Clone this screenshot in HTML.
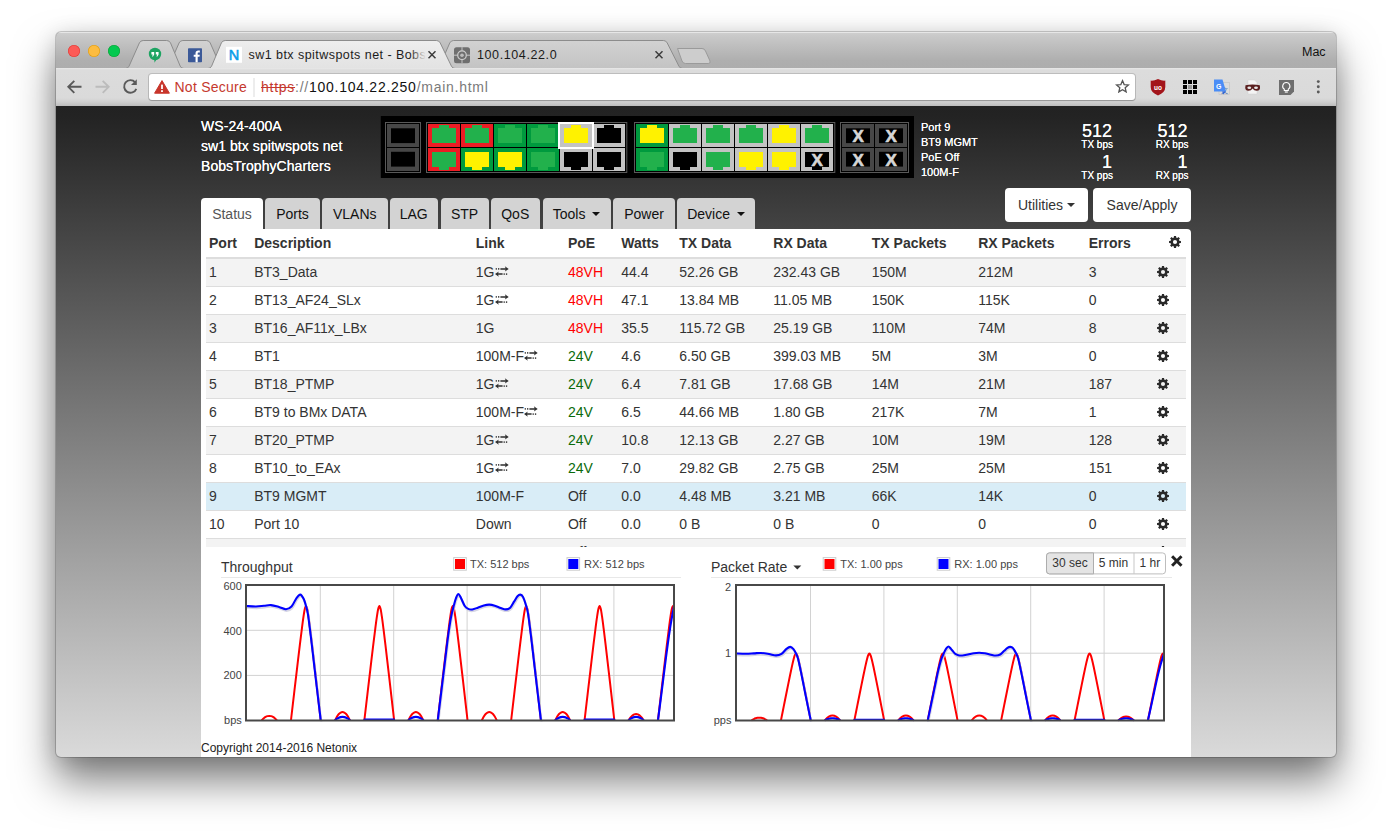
<!DOCTYPE html>
<html lang="en">
<head>
<meta charset="utf-8">
<title>sw1 btx spitwspots net - BobsTrophyCharters</title>
<style>
*{box-sizing:border-box;margin:0;padding:0}
html,body{width:1392px;height:837px;overflow:hidden;background:#fff}
body{font-family:"Liberation Sans",Arial,Helvetica,sans-serif;font-size:14px;color:#333;position:relative}
.abs{position:absolute}
#win{position:absolute;left:56px;top:32px;width:1280px;height:725px;border-radius:5px 5px 5px 5px;
  box-shadow:0 0 0 1px rgba(0,0,0,.18),0 24px 42px rgba(0,0,0,.5),0 3px 22px rgba(0,0,0,.14);overflow:hidden;background:#888}
#titlebar{position:absolute;left:0;top:0;width:1280px;height:36px;background:linear-gradient(#cecece 0,#c9c9c9 8%,#afafaf 78%,#adadad 100%);border-top:1px solid #e6e6e6}
.tl{position:absolute;top:12px;width:12px;height:12px;border-radius:50%}
#toolbar{position:absolute;left:0;top:36px;width:1280px;height:38px;background:linear-gradient(#e9e9e9 0,#dcdcdc 2px,#dadada 30px,#cfcfcf 34px,#bdbdbd 100%)}
#urlbox{position:absolute;left:93px;top:6px;width:986px;height:26px;background:#fff;border-radius:3px;box-shadow:0 0 0 1px rgba(0,0,0,.14),0 1px 1px rgba(0,0,0,.18)}
.ctext{font-family:"Liberation Sans",Arial,sans-serif;white-space:nowrap}
#page{position:absolute;left:0;top:74px;width:1280px;height:651px;background:linear-gradient(#222 0,#232323 1.5%,#dadada 100%);overflow:hidden}
.hdr{position:absolute;color:#fff;white-space:nowrap}
#panel{position:absolute;left:145px;top:123px;width:990px;height:540px;background:#fff;border-radius:0 4px 0 0}
.ntab{position:absolute;top:92px;height:31px;border-radius:4px 4px 0 0;background:#d3d3d3;color:#111;font-size:14px;line-height:20px;padding:6px 0 0 0;text-align:center;white-space:nowrap}
.ntab.act{background:#fff;color:#555}
.caret{display:inline-block;width:0;height:0;border-left:4px solid transparent;border-right:4px solid transparent;border-top:4px solid currentColor;vertical-align:middle;margin-left:3px;position:relative;top:-1px}
.btn{position:absolute;top:82px;height:34px;background:#fff;border-radius:4px;color:#333;font-size:14px;line-height:20px;padding-top:7px;text-align:center;white-space:nowrap}
table{border-collapse:collapse;table-layout:fixed;position:absolute;left:5px;top:0;width:980px}
th,td{text-align:left;padding:4px 0 4px 3px;font-size:14px;line-height:19px;white-space:nowrap;overflow:hidden;color:#333}
th{font-weight:bold;border-bottom:2px solid #ddd;padding:5px 0 4px 3px;line-height:19px}
td{border-top:1px solid #ddd}
tr.odd td{background:#f3f3f3}
tr.sel td{background:#d9edf7}
.red{color:#f00}.grn{color:#0a6a0a}
.gear{display:block}
.lg{position:absolute;font-size:11px;color:#333;white-space:nowrap}
.sw{position:absolute;width:13px;height:13px;border:1px solid #ccc;padding:1px;background:#fff}
.sw i{display:block;width:9px;height:9px}
.ylab{position:absolute;font-size:11px;color:#444;text-align:right;width:30px;line-height:12px}
</style>
</head>
<body>

<div id="win">
<div id="titlebar">
<div class="tl" style="left:12px;background:#fc5b57;box-shadow:inset 0 0 0 .6px #df3d38"></div>
<div class="tl" style="left:32px;background:#fdbc40;box-shadow:inset 0 0 0 .6px #de9c12"></div>
<div class="tl" style="left:52px;background:#04c950;box-shadow:inset 0 0 0 .6px #12a23a"></div>
<svg class="abs" style="left:0;top:-1px" width="1280" height="37" viewBox="0 0 1280 37">
<defs>
<linearGradient id="gi" x1="0" y1="0" x2="0" y2="1"><stop offset="0" stop-color="#d2d2d2"/><stop offset="1" stop-color="#c3c3c3"/></linearGradient>
<linearGradient id="ga" x1="0" y1="0" x2="0" y2="1"><stop offset="0" stop-color="#eeeeee"/><stop offset="1" stop-color="#e2e2e2"/></linearGradient>
</defs>
<!-- new tab button -->
<path d="M621.5 16.5 H646 Q648.5 16.5 649.5 19 L654 29 Q654.8 31.5 652.3 31.5 H629.5 Q627 31.5 626 29 Z" fill="#cdcdcd" stroke="#9a9a9a" stroke-width="1"/>
<!-- tab 4 -->
<path d="M380.0 36.5 Q382.5 36.5 383.6 34.1 L393.8 10.9 Q395.0 8.5 397.6 8.5 H607.4 Q610.0 8.5 611.2 10.9 L622.9 34.1 Q624.0 36.5 626.5 36.5 Z" fill="url(#gi)" stroke="#8c8c8c" stroke-width="1"/>
<!-- tab 2 -->
<path d="M109.3 36.5 Q111.8 36.5 112.9 34.1 L123.1 10.9 Q124.3 8.5 126.9 8.5 H150.4 Q153.0 8.5 154.2 10.9 L164.4 34.1 Q165.5 36.5 168.0 36.5 Z" fill="url(#gi)" stroke="#8c8c8c" stroke-width="1"/>
<!-- tab 1 -->
<path d="M69.5 36.5 Q72.0 36.5 73.1 34.1 L83.4 10.9 Q84.6 8.5 87.2 8.5 H110.7 Q113.3 8.5 114.5 10.9 L124.2 34.1 Q125.3 36.5 127.8 36.5 Z" fill="url(#gi)" stroke="#8c8c8c" stroke-width="1"/>
<!-- baseline -->
<rect x="0" y="36" width="1280" height="1" fill="#e9e9e9"/>
<!-- active tab -->
<path d="M152.0 36.5 Q154.5 36.5 155.6 34.1 L165.4 10.9 Q166.6 8.5 169.2 8.5 H380.4 Q383.0 8.5 384.2 10.9 L395.4 34.1 Q396.5 36.5 399.0 36.5 V37.5 H152 Z" fill="url(#ga)" stroke="#8c8c8c" stroke-width="1"/>
<rect x="155" y="36" width="241" height="1.2" fill="#e3e3e3"/>
<!-- hangouts icon -->
<g transform="translate(99,22.6)"><circle cx="0" cy="-.6" r="6.2" fill="#1da462"/><path d="M-1 4.5 L1.5 4 L-.2 8 Z M-0.8 3 H3 L-0.5 7.8Z" fill="#1da462"/><path d="M-3.6 -2.6 h2.8 v2.6 l-1.2 1.8 h-1 l.8 -1.8 h-1.4z M.8 -2.6 h2.8 v2.6 l-1.2 1.8 h-1 l.8 -1.8 h-1.4z" fill="#fff"/></g>
<!-- facebook icon -->
<g transform="translate(132,16.2)"><rect width="14" height="14" rx=".8" fill="#3b5998"/><path d="M9.7 14 V8.6 h1.8 l.27-2.1 H9.7 V5.2 c0-.6.17-1 1.04-1 h1.1 V2.3 c-.2-.03-.85-.08-1.6-.08 -1.6 0-2.7 .97-2.7 2.76 V6.5 H5.7 v2.1 h1.84 V14z" fill="#fff"/></g>
<!-- N icon -->
<rect x="170" y="14.8" width="16" height="16" fill="#fff"/>
<text x="178" y="28.2" text-anchor="middle" font-family="Liberation Sans, Arial, sans-serif" font-size="14.5" fill="#0a9ee8" stroke="#0a9ee8" stroke-width=".55">N</text>
<!-- title -->
<linearGradient id="tfade" gradientUnits="userSpaceOnUse" x1="192" x2="370" y1="0" y2="0"><stop offset="0" stop-color="#1a1a1a"/><stop offset=".91" stop-color="#1a1a1a"/><stop offset="1" stop-color="#1a1a1a" stop-opacity="0"/></linearGradient>
<text x="192.5" y="27" font-family="Liberation Sans, Arial, sans-serif" font-size="12.5" fill="url(#tfade)" letter-spacing=".45">sw1 btx spitwspots net - Bobs</text>



<path d="M372.5 19.2 l7 7 M379.5 19.2 l-7 7" stroke="#3c3c3c" stroke-width="1.5" fill="none"/>
<!-- tab 4 content -->
<g transform="translate(398,15.2)"><rect x="0" y="0" width="16" height="16" rx="2.5" fill="#6f6f6f"/><circle cx="8" cy="8" r="4.3" fill="none" stroke="#cfcfcf" stroke-width="1.2"/><circle cx="8" cy="8" r="1.8" fill="#bdbdbd"/><path d="M8 0v3.5M8 12.5V16M0 8h3.5M12.5 8H16" stroke="#cfcfcf" stroke-width=".9"/></g>
<text x="421" y="27" font-family="Liberation Sans, Arial, sans-serif" font-size="12.5" fill="#1a1a1a" letter-spacing=".6">100.104.22.0</text>
<path d="M599.5 19.2 l7 7 M606.5 19.2 l-7 7" stroke="#3c3c3c" stroke-width="1.5" fill="none"/>
<text x="1246" y="24.3" font-family="Liberation Sans, Arial, sans-serif" font-size="12.5" fill="#111">Mac</text>
</svg>
</div>
<div id="toolbar">
<svg class="abs" style="left:0;top:0" width="1280" height="38" viewBox="0 0 1280 38">
<!-- back -->
<path d="M25.5 18.8 H12.5 M18.3 12.8 L12.3 18.8 L18.3 24.8" stroke="#5a5a5a" stroke-width="1.9" fill="none"/>
<!-- forward -->
<path d="M39.5 18.8 H52.5 M46.7 12.8 L52.7 18.8 L46.7 24.8" stroke="#bcbcbc" stroke-width="1.9" fill="none"/>
<!-- reload -->
<path d="M79.2 14.3 A6.3 6.3 0 1 0 80.3 20.8" stroke="#5a5a5a" stroke-width="1.9" fill="none"/>
<path d="M80.8 11.2 V17 H75 Z" fill="#5a5a5a"/>
</svg>
<div id="urlbox">
<svg class="abs" style="left:0;top:0" width="987" height="26" viewBox="0 0 987 26">
<path d="M13 6.6 L20.4 19.2 H5.6 Z" fill="#c8352b" stroke="#c8352b" stroke-width="1" stroke-linejoin="round"/>
<rect x="12.1" y="10.6" width="1.8" height="4.4" fill="#fff"/><rect x="12.1" y="16.2" width="1.8" height="1.8" fill="#fff"/>
<rect x="104.5" y="4" width="1" height="19" fill="#dcdcdc"/>
<path d="M973.5 6.6 l1.65 3.95 4.25 .36 -3.23 2.8 .97 4.16 -3.64 -2.2 -3.64 2.2 .97 -4.16 -3.23 -2.8 4.25 -.36z" fill="none" stroke="#555" stroke-width="1.3" stroke-linejoin="miter"/>
</svg>
<div class="abs ctext" style="left:25.5px;top:4px;font-size:14px;line-height:18px;color:#c5392e;letter-spacing:.25px">Not Secure</div>
<div class="abs ctext" style="left:112px;top:4px;font-size:14px;line-height:18px;color:#111;letter-spacing:.74px"><span style="color:#c5392e;text-decoration:line-through">https</span><span style="color:#7a7a7a">://</span>100.104.22.250<span style="color:#7a7a7a">/main.html</span></div>
</div>
<svg class="abs" style="left:1080px;top:0" width="200" height="38" viewBox="0 0 200 38">
<!-- ublock shield -->
<path d="M22 11 Q18 13 14.7 12.6 V19 Q14.7 24.5 22 27.5 Q29.3 24.5 29.3 19 V12.6 Q26 13 22 11Z" fill="#a3151b"/>
<text x="22" y="22" text-anchor="middle" font-family="Liberation Sans, Arial, sans-serif" font-size="6.5" font-weight="bold" fill="#fff">uo</text>
<!-- grid -->
<g fill="#000"><rect x="47" y="12" width="4" height="4"/><rect x="52" y="12" width="4" height="4"/><rect x="57" y="12" width="4" height="4"/><rect x="47" y="17" width="4" height="4"/><rect x="52" y="17" width="4" height="4" fill="#999"/><rect x="57" y="17" width="4" height="4"/><rect x="47" y="22" width="4" height="4"/><rect x="52" y="22" width="4" height="4"/><rect x="57" y="22" width="4" height="4"/></g>
<!-- translate -->
<rect x="83" y="14.5" width="10.5" height="12" fill="#dcdcdc" stroke="#bbb" stroke-width=".5"/>
<text x="88.5" y="24.5" text-anchor="middle" font-family="Noto Sans CJK SC, sans-serif" font-size="7" fill="#5b7db1">文</text>
<path d="M78 11.5 h8.5 l3.5 12 h-12z" fill="#4a8df6"/><path d="M86 23.5 h4 l-2.6 3z" fill="#3367d6"/>
<text x="82.7" y="20.6" text-anchor="middle" font-family="Liberation Sans, Arial, sans-serif" font-size="7" font-weight="bold" fill="#fff">G</text>
<!-- mask -->
<path d="M112 12 h6.5 l2.5 2.5 V26 h-9z" fill="#f4f4f4" stroke="#ccc" stroke-width=".4"/>
<path d="M109.5 17.3 Q116.5 15.6 123.8 17.3 Q125 22.8 120.6 22.8 Q118 22.8 116.6 20.4 Q115.2 22.8 112.6 22.8 Q108.3 22.8 109.5 17.3Z" fill="#5a1f1f"/>
<ellipse cx="113.3" cy="19.8" rx="1.9" ry="1.2" fill="#e8e8e8"/><ellipse cx="120" cy="19.8" rx="1.9" ry="1.2" fill="#e8e8e8"/>
<!-- bulb -->
<path d="M143 12 h15 v11.5 l-3.5 3.5 h-11.5z" fill="#6e6e6e"/>
<path d="M150.3 14.5 a3.6 3.6 0 0 1 2 6.6 v1.4 h-4 v-1.4 a3.6 3.6 0 0 1 2 -6.6z" fill="none" stroke="#fff" stroke-width="1.1"/><rect x="148.8" y="23.4" width="3" height="1.2" fill="#fff"/>
<!-- menu -->
<circle cx="182.3" cy="13.6" r="1.45" fill="#5a5a5a"/><circle cx="182.3" cy="18.8" r="1.45" fill="#5a5a5a"/><circle cx="182.3" cy="24" r="1.45" fill="#5a5a5a"/>
</svg>
</div>

<div id="page">
<div class="hdr" style="left:145px;top:10px;font-size:14px;line-height:20px;text-shadow:0 0 .6px #fff;letter-spacing:.06px">WS-24-400A<br>sw1 btx spitwspots net<br>BobsTrophyCharters</div>
<svg class="abs" style="left:324px;top:10px" width="534" height="62" viewBox="0 0 534 62">
<rect x="0.8" width="533.2" height="62" fill="#000"/>
<rect x="5.5" y="6.5" width="35.0" height="50" fill="none" stroke="#595959" stroke-width="1"/>
<rect x="7" y="8" width="32" height="23" fill="#474747"/>
<rect x="11" y="12.3" width="24" height="14.8" fill="#000"/>
<rect x="7" y="32" width="32" height="23" fill="#474747"/>
<rect x="11" y="35.8" width="24" height="14.8" fill="#000"/>
<rect x="46.5" y="6.5" width="200.3" height="50" fill="none" stroke="#595959" stroke-width="1"/>
<rect x="48" y="8" width="32" height="23" fill="#ed1c24"/>
<path d="M52 12h24v15h-24z M59 9h10v3.2h-10z" fill="#22b14c"/>
<rect x="81" y="8" width="32" height="23" fill="#ed1c24"/>
<path d="M85 12h24v15h-24z M92 9h10v3.2h-10z" fill="#22b14c"/>
<rect x="114" y="8" width="32" height="23" fill="#009a3e"/>
<path d="M118 12h24v15h-24z M125 9h10v3.2h-10z" fill="#22b14c"/>
<rect x="147" y="8" width="32" height="23" fill="#009a3e"/>
<path d="M151 12h24v15h-24z M158 9h10v3.2h-10z" fill="#22b14c"/>
<rect x="213" y="8" width="32" height="23" fill="#c3c3c3"/>
<path d="M217 12h24v15h-24z M224 9h10v3.2h-10z" fill="#000"/>
<rect x="48" y="32" width="32" height="23" fill="#ed1c24"/>
<path d="M52 36h24v15h-24z M59 50.9h10v3.2h-10z" fill="#22b14c"/>
<rect x="81" y="32" width="32" height="23" fill="#009a3e"/>
<path d="M85 36h24v15h-24z M92 50.9h10v3.2h-10z" fill="#fff200"/>
<rect x="114" y="32" width="32" height="23" fill="#009a3e"/>
<path d="M118 36h24v15h-24z M125 50.9h10v3.2h-10z" fill="#fff200"/>
<rect x="147" y="32" width="32" height="23" fill="#009a3e"/>
<path d="M151 36h24v15h-24z M158 50.9h10v3.2h-10z" fill="#22b14c"/>
<rect x="180" y="32" width="32" height="23" fill="#c3c3c3"/>
<path d="M184 36h24v15h-24z M191 50.9h10v3.2h-10z" fill="#000"/>
<rect x="213" y="32" width="32" height="23" fill="#c3c3c3"/>
<path d="M217 36h24v15h-24z M224 50.9h10v3.2h-10z" fill="#000"/>
<rect x="178" y="6" width="36" height="27" fill="#fff"/>
<rect x="180" y="8" width="32" height="23" fill="#c3c3c3"/>
<path d="M184 12h24v15h-24z M191 9h10v3.2h-10z" fill="#fff200"/>
<rect x="254.5" y="6.5" width="200.3" height="50" fill="none" stroke="#595959" stroke-width="1"/>
<rect x="256" y="8" width="32" height="23" fill="#009a3e"/>
<path d="M260 12h24v15h-24z M267 9h10v3.2h-10z" fill="#fff200"/>
<rect x="289" y="8" width="32" height="23" fill="#c3c3c3"/>
<path d="M293 12h24v15h-24z M300 9h10v3.2h-10z" fill="#22b14c"/>
<rect x="322" y="8" width="32" height="23" fill="#c3c3c3"/>
<path d="M326 12h24v15h-24z M333 9h10v3.2h-10z" fill="#22b14c"/>
<rect x="355" y="8" width="32" height="23" fill="#c3c3c3"/>
<path d="M359 12h24v15h-24z M366 9h10v3.2h-10z" fill="#22b14c"/>
<rect x="388" y="8" width="32" height="23" fill="#c3c3c3"/>
<path d="M392 12h24v15h-24z M399 9h10v3.2h-10z" fill="#fff200"/>
<rect x="421" y="8" width="32" height="23" fill="#c3c3c3"/>
<path d="M425 12h24v15h-24z M432 9h10v3.2h-10z" fill="#22b14c"/>
<rect x="256" y="32" width="32" height="23" fill="#009a3e"/>
<path d="M260 36h24v15h-24z M267 50.9h10v3.2h-10z" fill="#22b14c"/>
<rect x="289" y="32" width="32" height="23" fill="#c3c3c3"/>
<path d="M293 36h24v15h-24z M300 50.9h10v3.2h-10z" fill="#000"/>
<rect x="322" y="32" width="32" height="23" fill="#c3c3c3"/>
<path d="M326 36h24v15h-24z M333 50.9h10v3.2h-10z" fill="#22b14c"/>
<rect x="355" y="32" width="32" height="23" fill="#c3c3c3"/>
<path d="M359 36h24v15h-24z M366 50.9h10v3.2h-10z" fill="#fff200"/>
<rect x="388" y="32" width="32" height="23" fill="#c3c3c3"/>
<path d="M392 36h24v15h-24z M399 50.9h10v3.2h-10z" fill="#fff200"/>
<rect x="421" y="32" width="32" height="23" fill="#c3c3c3"/>
<path d="M425 36h24v15h-24z M432 50.9h10v3.2h-10z" fill="#000"/>
<text x="437.1" y="50.2" text-anchor="middle" font-family="Liberation Sans, Arial, sans-serif" font-weight="bold" font-size="17" fill="#d6d6d6" stroke="#d6d6d6" stroke-width=".6">X</text>
<rect x="460.5" y="6.5" width="68.0" height="50" fill="none" stroke="#595959" stroke-width="1"/>
<rect x="462" y="8" width="32" height="23" fill="#474747"/>
<rect x="466" y="12.3" width="24" height="14.8" fill="#000"/>
<text x="478.1" y="26.2" text-anchor="middle" font-family="Liberation Sans, Arial, sans-serif" font-weight="bold" font-size="17" fill="#d6d6d6" stroke="#d6d6d6" stroke-width=".6">X</text>
<rect x="495" y="8" width="32" height="23" fill="#474747"/>
<rect x="499" y="12.3" width="24" height="14.8" fill="#000"/>
<text x="511.1" y="26.2" text-anchor="middle" font-family="Liberation Sans, Arial, sans-serif" font-weight="bold" font-size="17" fill="#d6d6d6" stroke="#d6d6d6" stroke-width=".6">X</text>
<rect x="462" y="32" width="32" height="23" fill="#474747"/>
<rect x="466" y="35.8" width="24" height="14.8" fill="#000"/>
<text x="478.1" y="50.2" text-anchor="middle" font-family="Liberation Sans, Arial, sans-serif" font-weight="bold" font-size="17" fill="#d6d6d6" stroke="#d6d6d6" stroke-width=".6">X</text>
<rect x="495" y="32" width="32" height="23" fill="#474747"/>
<rect x="499" y="35.8" width="24" height="14.8" fill="#000"/>
<text x="511.1" y="50.2" text-anchor="middle" font-family="Liberation Sans, Arial, sans-serif" font-weight="bold" font-size="17" fill="#d6d6d6" stroke="#d6d6d6" stroke-width=".6">X</text>
</svg>
<div class="hdr" style="left:865px;top:13.5px;font-size:11px;line-height:15px;text-shadow:0 0 .5px #fff">Port 9<br>BT9 MGMT<br>PoE Off<br>100M-F</div>
<div class="hdr" style="right:224px;top:15.5px;text-align:right;font-size:18px;line-height:18px;text-shadow:0 0 .6px #fff">512</div><div class="hdr" style="right:223px;top:33px;text-align:right;font-size:10px;line-height:12px;text-shadow:0 0 .5px #fff">TX bps</div><div class="hdr" style="right:224px;top:46.5px;text-align:right;font-size:18px;line-height:18px;text-shadow:0 0 .6px #fff">1</div><div class="hdr" style="right:223px;top:64px;text-align:right;font-size:10px;line-height:12px;text-shadow:0 0 .5px #fff">TX pps</div>
<div class="hdr" style="right:148.5px;top:15.5px;text-align:right;font-size:18px;line-height:18px;text-shadow:0 0 .6px #fff">512</div><div class="hdr" style="right:147.5px;top:33px;text-align:right;font-size:10px;line-height:12px;text-shadow:0 0 .5px #fff">RX bps</div><div class="hdr" style="right:148.5px;top:46.5px;text-align:right;font-size:18px;line-height:18px;text-shadow:0 0 .6px #fff">1</div><div class="hdr" style="right:147.5px;top:64px;text-align:right;font-size:10px;line-height:12px;text-shadow:0 0 .5px #fff">RX pps</div>
<div class="btn" style="left:949px;width:83px">Utilities<span class="caret" style="margin-left:4px"></span></div>
<div class="btn" style="left:1037px;width:98px">Save/Apply</div>
<div class="ntab act" style="left:145px;width:62px">Status</div>
<div class="ntab" style="left:209px;width:55px">Ports</div>
<div class="ntab" style="left:266px;width:65.5px">VLANs</div>
<div class="ntab" style="left:333.5px;width:48.5px">LAG</div>
<div class="ntab" style="left:384.5px;width:48.0px">STP</div>
<div class="ntab" style="left:434.5px;width:49.5px">QoS</div>
<div class="ntab" style="left:486.5px;width:68.0px">Tools <span class="caret"></span></div>
<div class="ntab" style="left:557px;width:62px">Power</div>
<div class="ntab" style="left:621px;width:78px">Device <span class="caret"></span></div>
<div id="panel">
<svg width="0" height="0" style="position:absolute"><defs>
<g id="gearp" fill="#2a2a2a"><path fill-rule="evenodd" d="M4.5 0 A4.5 4.5 0 1 0 -4.5 0 A4.5 4.5 0 1 0 4.5 0Z M2.05 0 A2.05 2.05 0 1 0 -2.05 0 A2.05 2.05 0 1 0 2.05 0Z"/><path transform="rotate(0)" d="M3.6 -1.3 L5.95 -1.05 V1.05 L3.6 1.3Z"/><path transform="rotate(45)" d="M3.6 -1.3 L5.95 -1.05 V1.05 L3.6 1.3Z"/><path transform="rotate(90)" d="M3.6 -1.3 L5.95 -1.05 V1.05 L3.6 1.3Z"/><path transform="rotate(135)" d="M3.6 -1.3 L5.95 -1.05 V1.05 L3.6 1.3Z"/><path transform="rotate(180)" d="M3.6 -1.3 L5.95 -1.05 V1.05 L3.6 1.3Z"/><path transform="rotate(225)" d="M3.6 -1.3 L5.95 -1.05 V1.05 L3.6 1.3Z"/><path transform="rotate(270)" d="M3.6 -1.3 L5.95 -1.05 V1.05 L3.6 1.3Z"/><path transform="rotate(315)" d="M3.6 -1.3 L5.95 -1.05 V1.05 L3.6 1.3Z"/></g>
<g id="arwp" fill="#2e2e2e"><path d="M9.9 0.3 L13.7 2.9 L9.9 5.5 L10.6 3.65 H5.4 V2.15 H10.6Z"/><rect x="0.7" y="2.15" width="1.2" height="1.5"/><rect x="3" y="2.15" width="1.3" height="1.5"/><path d="M3.8 5.5 L0 8.1 L3.8 10.7 L3.1 8.85 H7.6 V7.35 H3.1Z"/><rect x="8.6" y="7.35" width="1.2" height="1.5"/><rect x="10.9" y="7.35" width="1.3" height="1.5"/></g>
</defs></svg>
<div id="tblwrap" style="position:absolute;left:0;top:0;width:990px;height:318px;overflow:hidden">
<table><colgroup>
<col style="width:45.2px">
<col style="width:221.6px">
<col style="width:92.2px">
<col style="width:53.3px">
<col style="width:58.0px">
<col style="width:94.0px">
<col style="width:98.5px">
<col style="width:106.4px">
<col style="width:110.5px">
<col style="width:64.3px">
<col style="width:36px">
</colgroup>
<thead><tr><th>Port</th><th>Description</th><th>Link</th><th>PoE</th><th>Watts</th><th>TX Data</th><th>RX Data</th><th>TX Packets</th><th>RX Packets</th><th>Errors</th><th><svg class="gear" width="12" height="12" viewBox="-6 -6 12 12" style="margin-left:16px;margin-top:-3px"><use href="#gearp"/></svg></th></tr></thead><tbody>
<tr class="odd"><td>1</td><td>BT3_Data</td><td>1G<svg width="14" height="11" viewBox="0 0 14 11" style="vertical-align:0px;margin-left:0.4px"><use href="#arwp"/></svg></td><td class="red">48VH</td><td>44.4</td><td>52.26 GB</td><td>232.43 GB</td><td>150M</td><td>212M</td><td>3</td><td><svg class="gear" width="12" height="12" viewBox="-6 -6 12 12" style="margin-left:4px;margin-top:-0.5px"><use href="#gearp"/></svg></td></tr>
<tr class=""><td>2</td><td>BT13_AF24_SLx</td><td>1G<svg width="14" height="11" viewBox="0 0 14 11" style="vertical-align:0px;margin-left:0.4px"><use href="#arwp"/></svg></td><td class="red">48VH</td><td>47.1</td><td>13.84 MB</td><td>11.05 MB</td><td>150K</td><td>115K</td><td>0</td><td><svg class="gear" width="12" height="12" viewBox="-6 -6 12 12" style="margin-left:4px;margin-top:-0.5px"><use href="#gearp"/></svg></td></tr>
<tr class="odd"><td>3</td><td>BT16_AF11x_LBx</td><td>1G</td><td class="red">48VH</td><td>35.5</td><td>115.72 GB</td><td>25.19 GB</td><td>110M</td><td>74M</td><td>8</td><td><svg class="gear" width="12" height="12" viewBox="-6 -6 12 12" style="margin-left:4px;margin-top:-0.5px"><use href="#gearp"/></svg></td></tr>
<tr class=""><td>4</td><td>BT1</td><td>100M-F<svg width="14" height="11" viewBox="0 0 14 11" style="vertical-align:0px;margin-left:0.4px"><use href="#arwp"/></svg></td><td class="grn">24V</td><td>4.6</td><td>6.50 GB</td><td>399.03 MB</td><td>5M</td><td>3M</td><td>0</td><td><svg class="gear" width="12" height="12" viewBox="-6 -6 12 12" style="margin-left:4px;margin-top:-0.5px"><use href="#gearp"/></svg></td></tr>
<tr class="odd"><td>5</td><td>BT18_PTMP</td><td>1G<svg width="14" height="11" viewBox="0 0 14 11" style="vertical-align:0px;margin-left:0.4px"><use href="#arwp"/></svg></td><td class="grn">24V</td><td>6.4</td><td>7.81 GB</td><td>17.68 GB</td><td>14M</td><td>21M</td><td>187</td><td><svg class="gear" width="12" height="12" viewBox="-6 -6 12 12" style="margin-left:4px;margin-top:-0.5px"><use href="#gearp"/></svg></td></tr>
<tr class=""><td>6</td><td>BT9 to BMx DATA</td><td>100M-F<svg width="14" height="11" viewBox="0 0 14 11" style="vertical-align:0px;margin-left:0.4px"><use href="#arwp"/></svg></td><td class="grn">24V</td><td>6.5</td><td>44.66 MB</td><td>1.80 GB</td><td>217K</td><td>7M</td><td>1</td><td><svg class="gear" width="12" height="12" viewBox="-6 -6 12 12" style="margin-left:4px;margin-top:-0.5px"><use href="#gearp"/></svg></td></tr>
<tr class="odd"><td>7</td><td>BT20_PTMP</td><td>1G<svg width="14" height="11" viewBox="0 0 14 11" style="vertical-align:0px;margin-left:0.4px"><use href="#arwp"/></svg></td><td class="grn">24V</td><td>10.8</td><td>12.13 GB</td><td>2.27 GB</td><td>10M</td><td>19M</td><td>128</td><td><svg class="gear" width="12" height="12" viewBox="-6 -6 12 12" style="margin-left:4px;margin-top:-0.5px"><use href="#gearp"/></svg></td></tr>
<tr class=""><td>8</td><td>BT10_to_EAx</td><td>1G<svg width="14" height="11" viewBox="0 0 14 11" style="vertical-align:0px;margin-left:0.4px"><use href="#arwp"/></svg></td><td class="grn">24V</td><td>7.0</td><td>29.82 GB</td><td>2.75 GB</td><td>25M</td><td>25M</td><td>151</td><td><svg class="gear" width="12" height="12" viewBox="-6 -6 12 12" style="margin-left:4px;margin-top:-0.5px"><use href="#gearp"/></svg></td></tr>
<tr class="sel"><td>9</td><td>BT9 MGMT</td><td>100M-F</td><td>Off</td><td>0.0</td><td>4.48 MB</td><td>3.21 MB</td><td>66K</td><td>14K</td><td>0</td><td><svg class="gear" width="12" height="12" viewBox="-6 -6 12 12" style="margin-left:4px;margin-top:-0.5px"><use href="#gearp"/></svg></td></tr>
<tr class=""><td>10</td><td>Port 10</td><td>Down</td><td>Off</td><td>0.0</td><td>0 B</td><td>0 B</td><td>0</td><td>0</td><td>0</td><td><svg class="gear" width="12" height="12" viewBox="-6 -6 12 12" style="margin-left:4px;margin-top:-0.5px"><use href="#gearp"/></svg></td></tr>
<tr class="odd"><td>11</td><td>Port 11</td><td>Down</td><td>Off</td><td>0.0</td><td>0 B</td><td>0 B</td><td>0</td><td>0</td><td>0</td><td><svg class="gear" width="12" height="12" viewBox="-6 -6 12 12" style="margin-left:4px;margin-top:-0.5px"><use href="#gearp"/></svg></td></tr>
</tbody></table></div>
<svg class="abs" style="left:0;top:318px" width="990" height="222" viewBox="0 0 990 222" font-family="Liberation Sans, Arial, sans-serif">
<rect x="0" y="0" width="990" height="222" fill="#fff"/>
<rect x="20" y="30" width="460" height="1" fill="#e8e8e8"/>
<rect x="510" y="30" width="461" height="1" fill="#e8e8e8"/>
<rect x="45" y="38" width="428" height="135.5" fill="#fff"/>
<rect x="118.8" y="38" width="1" height="135.5" fill="#d2d2d2"/>
<rect x="192.2" y="38" width="1" height="135.5" fill="#d2d2d2"/>
<rect x="265.6" y="38" width="1" height="135.5" fill="#d2d2d2"/>
<rect x="339.0" y="38" width="1" height="135.5" fill="#d2d2d2"/>
<rect x="412.4" y="38" width="1" height="135.5" fill="#d2d2d2"/>
<rect x="45" y="82.8" width="428" height="1" fill="#d2d2d2"/>
<rect x="45" y="127.9" width="428" height="1" fill="#d2d2d2"/>
<clipPath id="cp1"><rect x="45" y="36" width="428" height="138.5"/></clipPath>
<rect x="535" y="38" width="428" height="135.5" fill="#fff"/>
<rect x="609.0" y="38" width="1" height="135.5" fill="#d2d2d2"/>
<rect x="682.4" y="38" width="1" height="135.5" fill="#d2d2d2"/>
<rect x="755.8" y="38" width="1" height="135.5" fill="#d2d2d2"/>
<rect x="829.2" y="38" width="1" height="135.5" fill="#d2d2d2"/>
<rect x="902.6" y="38" width="1" height="135.5" fill="#d2d2d2"/>
<rect x="535" y="105.7" width="428" height="1" fill="#d2d2d2"/>
<clipPath id="cp2"><rect x="535" y="36" width="428" height="138.5"/></clipPath>
<g clip-path="url(#cp1)" fill="none" stroke-linejoin="round" stroke-linecap="round">
<path d="M61.00 173.00 C61.30 172.70 62.21 171.71 62.82 171.20 C63.43 170.69 64.04 170.26 64.65 169.92 C65.26 169.58 65.87 169.32 66.48 169.15 C67.09 168.98 67.69 168.90 68.30 168.90 C68.91 168.90 69.51 168.98 70.12 169.15 C70.73 169.32 71.34 169.58 71.95 169.92 C72.56 170.26 73.16 170.69 73.77 171.20 C74.38 171.71 75.29 172.70 75.60 173.00 M90.00 173.00 C90.50 168.72 92.00 155.84 93.00 147.31 C94.00 138.78 95.00 130.23 96.00 121.80 C97.00 113.37 98.17 103.57 99.00 96.71 C99.83 89.85 100.40 85.27 101.00 80.63 C101.60 75.99 102.13 71.99 102.60 68.88 C103.07 65.77 103.40 63.59 103.80 61.94 C104.20 60.29 104.60 58.98 105.00 59.00 C105.40 59.02 105.80 60.35 106.20 62.05 C106.60 63.75 106.93 66.01 107.40 69.21 C107.87 72.41 108.40 76.52 109.00 81.27 C109.60 86.02 110.17 90.70 111.00 97.72 C111.83 104.73 113.00 114.75 114.00 123.36 C115.00 131.97 116.05 141.14 117.00 149.41 C117.95 157.68 119.25 169.07 119.70 173.00 M134.20 173.00 C134.50 172.42 135.41 170.51 136.02 169.51 C136.63 168.51 137.24 167.67 137.85 167.01 C138.46 166.34 139.07 165.85 139.68 165.52 C140.29 165.19 140.89 165.02 141.50 165.02 C142.11 165.02 142.71 165.19 143.32 165.52 C143.93 165.85 144.54 166.34 145.15 167.01 C145.76 167.67 146.37 168.51 146.98 169.51 C147.59 170.51 148.50 172.42 148.80 173.00 M163.40 173.00 C163.90 168.72 165.40 155.84 166.40 147.31 C167.40 138.78 168.40 130.23 169.40 121.80 C170.40 113.37 171.57 103.57 172.40 96.71 C173.23 89.85 173.80 85.27 174.40 80.63 C175.00 75.99 175.53 71.99 176.00 68.88 C176.47 65.77 176.80 63.59 177.20 61.94 C177.60 60.29 178.00 58.98 178.40 59.00 C178.80 59.02 179.20 60.35 179.60 62.05 C180.00 63.75 180.33 66.01 180.80 69.21 C181.27 72.41 181.80 76.52 182.40 81.27 C183.00 86.02 183.57 90.70 184.40 97.72 C185.23 104.73 186.40 114.75 187.40 123.36 C188.40 131.97 189.45 141.14 190.40 149.41 C191.35 157.68 192.65 169.07 193.10 173.00 M207.60 173.00 C207.91 172.42 208.82 170.51 209.43 169.51 C210.04 168.51 210.64 167.67 211.25 167.01 C211.86 166.34 212.47 165.85 213.08 165.52 C213.69 165.19 214.29 165.02 214.90 165.02 C215.51 165.02 216.12 165.19 216.73 165.52 C217.34 165.85 217.94 166.34 218.55 167.01 C219.16 167.67 219.77 168.51 220.38 169.51 C220.99 170.51 221.90 172.42 222.20 173.00 M236.80 173.00 C237.30 168.72 238.80 155.84 239.80 147.31 C240.80 138.78 241.80 130.23 242.80 121.80 C243.80 113.37 244.97 103.57 245.80 96.71 C246.63 89.85 247.20 85.27 247.80 80.63 C248.40 75.99 248.93 71.99 249.40 68.88 C249.87 65.77 250.20 63.59 250.60 61.94 C251.00 60.29 251.40 58.98 251.80 59.00 C252.20 59.02 252.60 60.35 253.00 62.05 C253.40 63.75 253.73 66.01 254.20 69.21 C254.67 72.41 255.20 76.52 255.80 81.27 C256.40 86.02 256.97 90.70 257.80 97.72 C258.63 104.73 259.80 114.75 260.80 123.36 C261.80 131.97 262.85 141.14 263.80 149.41 C264.75 157.68 266.05 169.07 266.50 173.00 M281.00 173.00 C281.31 172.42 282.22 170.51 282.83 169.51 C283.44 168.51 284.04 167.67 284.65 167.01 C285.26 166.34 285.87 165.85 286.48 165.52 C287.09 165.19 287.69 165.02 288.30 165.02 C288.91 165.02 289.51 165.19 290.12 165.52 C290.73 165.85 291.34 166.34 291.95 167.01 C292.56 167.67 293.16 168.51 293.77 169.51 C294.38 170.51 295.30 172.42 295.60 173.00 M310.20 173.00 C310.70 168.72 312.20 155.84 313.20 147.31 C314.20 138.78 315.20 130.23 316.20 121.80 C317.20 113.37 318.37 103.57 319.20 96.71 C320.03 89.85 320.60 85.27 321.20 80.63 C321.80 75.99 322.33 71.99 322.80 68.88 C323.27 65.77 323.60 63.59 324.00 61.94 C324.40 60.29 324.80 58.98 325.20 59.00 C325.60 59.02 326.00 60.35 326.40 62.05 C326.80 63.75 327.13 66.01 327.60 69.21 C328.07 72.41 328.60 76.52 329.20 81.27 C329.80 86.02 330.37 90.70 331.20 97.72 C332.03 104.73 333.20 114.75 334.20 123.36 C335.20 131.97 336.25 141.14 337.20 149.41 C338.15 157.68 339.45 169.07 339.90 173.00 M354.40 173.00 C354.70 172.42 355.62 170.51 356.23 169.51 C356.84 168.51 357.44 167.67 358.05 167.01 C358.66 166.34 359.27 165.85 359.88 165.52 C360.49 165.19 361.09 165.02 361.70 165.02 C362.31 165.02 362.92 165.19 363.53 165.52 C364.14 165.85 364.74 166.34 365.35 167.01 C365.96 167.67 366.57 168.51 367.18 169.51 C367.79 170.51 368.70 172.42 369.00 173.00 M383.60 173.00 C384.10 168.72 385.60 155.84 386.60 147.31 C387.60 138.78 388.60 130.23 389.60 121.80 C390.60 113.37 391.77 103.57 392.60 96.71 C393.43 89.85 394.00 85.27 394.60 80.63 C395.20 75.99 395.73 71.99 396.20 68.88 C396.67 65.77 397.00 63.59 397.40 61.94 C397.80 60.29 398.20 58.98 398.60 59.00 C399.00 59.02 399.40 60.35 399.80 62.05 C400.20 63.75 400.53 66.01 401.00 69.21 C401.47 72.41 402.00 76.52 402.60 81.27 C403.20 86.02 403.77 90.70 404.60 97.72 C405.43 104.73 406.60 114.75 407.60 123.36 C408.60 131.97 409.65 141.14 410.60 149.41 C411.55 157.68 412.85 169.07 413.30 173.00 M427.80 173.00 C428.10 172.56 429.01 171.12 429.62 170.36 C430.23 169.61 430.84 168.97 431.45 168.47 C432.06 167.97 432.67 167.59 433.28 167.34 C433.89 167.09 434.49 166.96 435.10 166.96 C435.71 166.96 436.31 167.09 436.92 167.34 C437.53 167.59 438.14 167.97 438.75 168.47 C439.36 168.97 439.97 169.61 440.58 170.36 C441.19 171.12 442.10 172.56 442.40 173.00 M457.00 173.00 C457.50 168.72 459.00 155.84 460.00 147.31 C461.00 138.78 462.00 130.23 463.00 121.80 C464.00 113.37 465.17 103.57 466.00 96.71 C466.83 89.85 467.40 85.27 468.00 80.63 C468.60 75.99 469.13 71.99 469.60 68.88 C470.07 65.77 470.40 63.59 470.80 61.94 C471.20 60.29 471.60 58.98 472.00 59.00 C472.40 59.02 472.80 60.35 473.20 62.05 C473.60 63.75 473.93 66.01 474.40 69.21 C474.87 72.41 475.40 76.52 476.00 81.27 C476.60 86.02 477.17 90.70 478.00 97.72 C478.83 104.73 480.00 114.75 481.00 123.36 C482.00 131.97 483.05 141.14 484.00 149.41 C484.95 157.68 486.25 169.07 486.70 173.00 " stroke="#ff0000" stroke-width="2"/>
<path d="M45.00 59.00 C46.67 59.08 52.00 59.50 55.00 59.46 C58.00 59.42 60.50 59.00 63.00 58.77 C65.50 58.54 67.50 57.90 70.00 58.09 C72.50 58.28 75.50 59.23 78.00 59.91 C80.50 60.59 82.92 62.25 85.00 62.19 C87.08 62.13 88.75 61.43 90.50 59.57 C92.25 57.71 94.03 53.02 95.50 51.02 C96.97 49.03 98.13 47.51 99.30 47.60 C100.47 47.70 101.55 49.69 102.50 51.59 C103.45 53.49 104.25 56.34 105.00 59.00 C105.75 61.66 106.17 62.23 107.00 67.55 C107.83 72.87 109.00 82.75 110.00 90.92 C111.00 99.09 112.00 108.02 113.00 116.57 C114.00 125.12 114.88 132.81 116.00 142.22 C117.12 151.62 119.08 167.87 119.70 173.00 M236.80 173.00 C237.33 168.63 238.88 155.90 240.00 146.78 C241.12 137.66 242.33 127.78 243.50 118.28 C244.67 108.78 245.92 97.76 247.00 89.78 C248.08 81.80 249.00 75.72 250.00 70.40 C251.00 65.08 252.17 61.09 253.00 57.86 C253.83 54.63 254.27 52.83 255.00 51.02 C255.73 49.22 256.57 47.03 257.40 47.03 C258.23 47.03 258.93 49.03 260.00 51.02 C261.07 53.02 262.58 57.20 263.80 59.00 C265.02 60.80 266.07 61.28 267.30 61.85 C268.53 62.42 269.62 62.61 271.20 62.42 C272.78 62.23 274.87 61.38 276.80 60.71 C278.73 60.05 280.88 58.94 282.80 58.43 C284.72 57.92 286.47 57.59 288.30 57.63 C290.13 57.67 291.88 58.09 293.80 58.66 C295.72 59.23 297.97 60.42 299.80 61.05 C301.63 61.68 303.23 62.48 304.80 62.42 C306.37 62.36 307.80 62.04 309.20 60.71 C310.60 59.38 311.98 56.34 313.20 54.44 C314.42 52.54 315.48 50.45 316.50 49.31 C317.52 48.17 318.38 47.51 319.30 47.60 C320.22 47.70 321.02 47.98 322.00 49.88 C322.98 51.78 324.33 56.05 325.20 59.00 C326.07 61.95 326.37 62.23 327.20 67.55 C328.03 72.87 329.20 82.75 330.20 90.92 C331.20 99.09 332.20 108.02 333.20 116.57 C334.20 125.12 335.08 132.81 336.20 142.22 C337.32 151.62 339.28 167.87 339.90 173.00 " stroke="#ccccdd" stroke-width="2.2" transform="translate(0.6,1.6)" opacity=".8"/>
<path d="M45.00 59.00 C46.67 59.08 52.00 59.50 55.00 59.46 C58.00 59.42 60.50 59.00 63.00 58.77 C65.50 58.54 67.50 57.90 70.00 58.09 C72.50 58.28 75.50 59.23 78.00 59.91 C80.50 60.59 82.92 62.25 85.00 62.19 C87.08 62.13 88.75 61.43 90.50 59.57 C92.25 57.71 94.03 53.02 95.50 51.02 C96.97 49.03 98.13 47.51 99.30 47.60 C100.47 47.70 101.55 49.69 102.50 51.59 C103.45 53.49 104.25 56.34 105.00 59.00 C105.75 61.66 106.17 62.23 107.00 67.55 C107.83 72.87 109.00 82.75 110.00 90.92 C111.00 99.09 112.00 108.02 113.00 116.57 C114.00 125.12 114.88 132.81 116.00 142.22 C117.12 151.62 119.08 167.87 119.70 173.00 M134.20 173.00 C134.50 172.78 135.41 172.03 136.02 171.65 C136.63 171.27 137.24 170.95 137.85 170.69 C138.46 170.43 139.07 170.24 139.68 170.11 C140.29 169.98 140.89 169.92 141.50 169.92 C142.11 169.92 142.71 169.98 143.32 170.11 C143.93 170.24 144.54 170.43 145.15 170.69 C145.76 170.95 146.37 171.27 146.98 171.65 C147.59 172.03 148.50 172.78 148.80 173.00 M163.40 172.54 C168.35 172.54 188.15 172.54 193.10 172.54 M207.60 173.00 C207.91 172.78 208.82 172.03 209.43 171.65 C210.04 171.27 210.64 170.95 211.25 170.69 C211.86 170.43 212.47 170.24 213.08 170.11 C213.69 169.98 214.29 169.92 214.90 169.92 C215.51 169.92 216.12 169.98 216.73 170.11 C217.34 170.24 217.94 170.43 218.55 170.69 C219.16 170.95 219.77 171.27 220.38 171.65 C220.99 172.03 221.90 172.78 222.20 173.00 M236.80 173.00 C237.33 168.63 238.88 155.90 240.00 146.78 C241.12 137.66 242.33 127.78 243.50 118.28 C244.67 108.78 245.92 97.76 247.00 89.78 C248.08 81.80 249.00 75.72 250.00 70.40 C251.00 65.08 252.17 61.09 253.00 57.86 C253.83 54.63 254.27 52.83 255.00 51.02 C255.73 49.22 256.57 47.03 257.40 47.03 C258.23 47.03 258.93 49.03 260.00 51.02 C261.07 53.02 262.58 57.20 263.80 59.00 C265.02 60.80 266.07 61.28 267.30 61.85 C268.53 62.42 269.62 62.61 271.20 62.42 C272.78 62.23 274.87 61.38 276.80 60.71 C278.73 60.05 280.88 58.94 282.80 58.43 C284.72 57.92 286.47 57.59 288.30 57.63 C290.13 57.67 291.88 58.09 293.80 58.66 C295.72 59.23 297.97 60.42 299.80 61.05 C301.63 61.68 303.23 62.48 304.80 62.42 C306.37 62.36 307.80 62.04 309.20 60.71 C310.60 59.38 311.98 56.34 313.20 54.44 C314.42 52.54 315.48 50.45 316.50 49.31 C317.52 48.17 318.38 47.51 319.30 47.60 C320.22 47.70 321.02 47.98 322.00 49.88 C322.98 51.78 324.33 56.05 325.20 59.00 C326.07 61.95 326.37 62.23 327.20 67.55 C328.03 72.87 329.20 82.75 330.20 90.92 C331.20 99.09 332.20 108.02 333.20 116.57 C334.20 125.12 335.08 132.81 336.20 142.22 C337.32 151.62 339.28 167.87 339.90 173.00 M354.40 173.00 C354.70 172.78 355.62 172.03 356.23 171.65 C356.84 171.27 357.44 170.95 358.05 170.69 C358.66 170.43 359.27 170.24 359.88 170.11 C360.49 169.98 361.09 169.92 361.70 169.92 C362.31 169.92 362.92 169.98 363.53 170.11 C364.14 170.24 364.74 170.43 365.35 170.69 C365.96 170.95 366.57 171.27 367.18 171.65 C367.79 172.03 368.70 172.78 369.00 173.00 M383.60 172.54 C388.55 172.54 408.35 172.54 413.30 172.54 M427.80 173.00 C428.10 172.78 429.01 172.03 429.62 171.65 C430.23 171.27 430.84 170.95 431.45 170.69 C432.06 170.43 432.67 170.24 433.28 170.11 C433.89 169.98 434.49 169.92 435.10 169.92 C435.71 169.92 436.31 169.98 436.92 170.11 C437.53 170.24 438.14 170.43 438.75 170.69 C439.36 170.95 439.97 171.27 440.58 171.65 C441.19 172.03 442.10 172.78 442.40 173.00 M457.00 173.00 C457.67 167.87 459.67 152.67 461.00 142.22 C462.33 131.77 463.67 120.37 465.00 110.30 C466.33 100.23 467.67 90.35 469.00 81.80 C470.33 73.25 472.33 62.80 473.00 59.00 " stroke="#0000ff" stroke-width="2.1"/>
</g>
<g clip-path="url(#cp2)" fill="none" stroke-linejoin="round" stroke-linecap="round">
<path d="M551.00 173.10 C551.31 172.93 552.22 172.35 552.83 172.05 C553.44 171.75 554.04 171.50 554.65 171.30 C555.26 171.10 555.87 170.95 556.48 170.85 C557.09 170.75 557.69 170.70 558.30 170.70 C558.91 170.70 559.51 170.75 560.12 170.85 C560.73 170.95 561.34 171.10 561.95 171.30 C562.56 171.50 563.16 171.75 563.77 172.05 C564.38 172.35 565.30 172.93 565.60 173.10 M580.00 173.10 C580.50 170.60 582.00 163.07 583.00 158.09 C584.00 153.11 585.00 148.12 586.00 143.19 C587.00 138.26 588.17 132.54 589.00 128.53 C589.83 124.52 590.40 121.85 591.00 119.14 C591.60 116.43 592.13 114.09 592.60 112.27 C593.07 110.45 593.40 109.18 593.80 108.22 C594.20 107.26 594.60 106.49 595.00 106.50 C595.40 106.51 595.80 107.28 596.20 108.28 C596.60 109.28 596.93 110.60 597.40 112.47 C597.87 114.34 598.40 116.73 599.00 119.51 C599.60 122.29 600.17 125.02 601.00 129.12 C601.83 133.22 603.00 139.07 604.00 144.10 C605.00 149.13 606.05 154.49 607.00 159.32 C607.95 164.15 609.25 170.80 609.70 173.10 M624.20 173.10 C624.50 172.76 625.41 171.64 626.02 171.06 C626.63 170.48 627.24 169.99 627.85 169.60 C628.46 169.21 629.06 168.92 629.67 168.73 C630.28 168.54 630.89 168.44 631.50 168.44 C632.11 168.44 632.72 168.54 633.33 168.73 C633.94 168.92 634.54 169.21 635.15 169.60 C635.76 169.99 636.37 170.48 636.98 171.06 C637.59 171.64 638.50 172.76 638.80 173.10 M653.40 173.10 C653.90 170.60 655.40 163.07 656.40 158.09 C657.40 153.11 658.40 148.12 659.40 143.19 C660.40 138.26 661.57 132.54 662.40 128.53 C663.23 124.52 663.80 121.85 664.40 119.14 C665.00 116.43 665.53 114.09 666.00 112.27 C666.47 110.45 666.80 109.18 667.20 108.22 C667.60 107.26 668.00 106.49 668.40 106.50 C668.80 106.51 669.20 107.28 669.60 108.28 C670.00 109.28 670.33 110.60 670.80 112.47 C671.27 114.34 671.80 116.73 672.40 119.51 C673.00 122.29 673.57 125.02 674.40 129.12 C675.23 133.22 676.40 139.07 677.40 144.10 C678.40 149.13 679.45 154.49 680.40 159.32 C681.35 164.15 682.65 170.80 683.10 173.10 M697.60 173.10 C697.90 172.76 698.81 171.64 699.42 171.06 C700.03 170.48 700.64 169.99 701.25 169.60 C701.86 169.21 702.47 168.92 703.08 168.73 C703.69 168.54 704.29 168.44 704.90 168.44 C705.51 168.44 706.12 168.54 706.73 168.73 C707.34 168.92 707.94 169.21 708.55 169.60 C709.16 169.99 709.77 170.48 710.38 171.06 C710.99 171.64 711.90 172.76 712.20 173.10 M726.80 173.10 C727.30 170.60 728.80 163.07 729.80 158.09 C730.80 153.11 731.80 148.12 732.80 143.19 C733.80 138.26 734.97 132.54 735.80 128.53 C736.63 124.52 737.20 121.85 737.80 119.14 C738.40 116.43 738.93 114.09 739.40 112.27 C739.87 110.45 740.20 109.18 740.60 108.22 C741.00 107.26 741.40 106.49 741.80 106.50 C742.20 106.51 742.60 107.28 743.00 108.28 C743.40 109.28 743.73 110.60 744.20 112.47 C744.67 114.34 745.20 116.73 745.80 119.51 C746.40 122.29 746.97 125.02 747.80 129.12 C748.63 133.22 749.80 139.07 750.80 144.10 C751.80 149.13 752.85 154.49 753.80 159.32 C754.75 164.15 756.05 170.80 756.50 173.10 M771.00 173.10 C771.31 172.76 772.22 171.64 772.83 171.06 C773.44 170.48 774.04 169.99 774.65 169.60 C775.26 169.21 775.87 168.92 776.48 168.73 C777.09 168.54 777.69 168.44 778.30 168.44 C778.91 168.44 779.51 168.54 780.12 168.73 C780.73 168.92 781.34 169.21 781.95 169.60 C782.56 169.99 783.16 170.48 783.77 171.06 C784.38 171.64 785.30 172.76 785.60 173.10 M800.20 173.10 C800.70 170.60 802.20 163.07 803.20 158.09 C804.20 153.11 805.20 148.12 806.20 143.19 C807.20 138.26 808.37 132.54 809.20 128.53 C810.03 124.52 810.60 121.85 811.20 119.14 C811.80 116.43 812.33 114.09 812.80 112.27 C813.27 110.45 813.60 109.18 814.00 108.22 C814.40 107.26 814.80 106.49 815.20 106.50 C815.60 106.51 816.00 107.28 816.40 108.28 C816.80 109.28 817.13 110.60 817.60 112.47 C818.07 114.34 818.60 116.73 819.20 119.51 C819.80 122.29 820.37 125.02 821.20 129.12 C822.03 133.22 823.20 139.07 824.20 144.10 C825.20 149.13 826.25 154.49 827.20 159.32 C828.15 164.15 829.45 170.80 829.90 173.10 M844.40 173.10 C844.70 172.76 845.61 171.64 846.22 171.06 C846.83 170.48 847.44 169.99 848.05 169.60 C848.66 169.21 849.27 168.92 849.88 168.73 C850.49 168.54 851.09 168.44 851.70 168.44 C852.31 168.44 852.92 168.54 853.53 168.73 C854.14 168.92 854.74 169.21 855.35 169.60 C855.96 169.99 856.57 170.48 857.18 171.06 C857.79 171.64 858.70 172.76 859.00 173.10 M873.60 173.10 C874.10 170.60 875.60 163.07 876.60 158.09 C877.60 153.11 878.60 148.12 879.60 143.19 C880.60 138.26 881.77 132.54 882.60 128.53 C883.43 124.52 884.00 121.85 884.60 119.14 C885.20 116.43 885.73 114.09 886.20 112.27 C886.67 110.45 887.00 109.18 887.40 108.22 C887.80 107.26 888.20 106.49 888.60 106.50 C889.00 106.51 889.40 107.28 889.80 108.28 C890.20 109.28 890.53 110.60 891.00 112.47 C891.47 114.34 892.00 116.73 892.60 119.51 C893.20 122.29 893.77 125.02 894.60 129.12 C895.43 133.22 896.60 139.07 897.60 144.10 C898.60 149.13 899.65 154.49 900.60 159.32 C901.55 164.15 902.85 170.80 903.30 173.10 M917.80 173.10 C918.10 172.84 919.01 172.00 919.62 171.56 C920.23 171.12 920.84 170.75 921.45 170.45 C922.06 170.15 922.67 169.94 923.28 169.79 C923.89 169.64 924.49 169.57 925.10 169.57 C925.71 169.57 926.31 169.64 926.92 169.79 C927.53 169.94 928.14 170.15 928.75 170.45 C929.36 170.75 929.97 171.12 930.58 171.56 C931.19 172.00 932.10 172.84 932.40 173.10 M947.00 173.10 C947.50 170.60 949.00 163.07 950.00 158.09 C951.00 153.11 952.00 148.12 953.00 143.19 C954.00 138.26 955.17 132.54 956.00 128.53 C956.83 124.52 957.40 121.85 958.00 119.14 C958.60 116.43 959.13 114.09 959.60 112.27 C960.07 110.45 960.40 109.18 960.80 108.22 C961.20 107.26 961.60 106.49 962.00 106.50 C962.40 106.51 962.80 107.28 963.20 108.28 C963.60 109.28 963.93 110.60 964.40 112.47 C964.87 114.34 965.40 116.73 966.00 119.51 C966.60 122.29 967.17 125.02 968.00 129.12 C968.83 133.22 970.00 139.07 971.00 144.10 C972.00 149.13 973.05 154.49 974.00 159.32 C974.95 164.15 976.25 170.80 976.70 173.10 " stroke="#ff0000" stroke-width="2"/>
<path d="M535.00 106.50 C536.67 106.55 542.00 106.79 545.00 106.77 C548.00 106.75 550.50 106.50 553.00 106.37 C555.50 106.24 557.50 105.86 560.00 105.97 C562.50 106.08 565.50 106.63 568.00 107.03 C570.50 107.43 572.92 108.39 575.00 108.36 C577.08 108.33 578.75 107.92 580.50 106.83 C582.25 105.74 584.03 103.00 585.50 101.84 C586.97 100.68 588.13 99.78 589.30 99.84 C590.47 99.90 591.55 101.06 592.50 102.17 C593.45 103.28 594.25 104.94 595.00 106.50 C595.75 108.06 596.17 108.39 597.00 111.50 C597.83 114.61 599.00 120.38 600.00 125.15 C601.00 129.92 602.00 135.13 603.00 140.13 C604.00 145.12 604.88 149.62 606.00 155.12 C607.12 160.62 609.08 170.10 609.70 173.10 M726.80 173.10 C727.33 170.55 728.88 163.11 730.00 157.78 C731.12 152.45 732.33 146.68 733.50 141.13 C734.67 135.58 735.92 129.14 737.00 124.48 C738.08 119.82 739.00 116.27 740.00 113.16 C741.00 110.05 742.17 107.72 743.00 105.83 C743.83 103.94 744.27 102.89 745.00 101.84 C745.73 100.79 746.57 99.51 747.40 99.51 C748.23 99.51 748.93 100.68 750.00 101.84 C751.07 103.00 752.58 105.44 753.80 106.50 C755.02 107.56 756.07 107.84 757.30 108.17 C758.53 108.50 759.62 108.61 761.20 108.50 C762.78 108.39 764.87 107.89 766.80 107.50 C768.73 107.11 770.88 106.47 772.80 106.17 C774.72 105.87 776.47 105.68 778.30 105.70 C780.13 105.72 781.88 105.97 783.80 106.30 C785.72 106.63 787.97 107.33 789.80 107.70 C791.63 108.07 793.23 108.53 794.80 108.50 C796.37 108.47 797.80 108.28 799.20 107.50 C800.60 106.72 801.98 104.95 803.20 103.84 C804.42 102.73 805.48 101.51 806.50 100.84 C807.52 100.17 808.38 99.78 809.30 99.84 C810.22 99.90 811.02 100.06 812.00 101.17 C812.98 102.28 814.33 104.78 815.20 106.50 C816.07 108.22 816.37 108.39 817.20 111.50 C818.03 114.61 819.20 120.38 820.20 125.15 C821.20 129.92 822.20 135.13 823.20 140.13 C824.20 145.12 825.08 149.62 826.20 155.12 C827.32 160.62 829.28 170.10 829.90 173.10 " stroke="#ccccdd" stroke-width="2.2" transform="translate(0.6,1.6)" opacity=".8"/>
<path d="M535.00 106.50 C536.67 106.55 542.00 106.79 545.00 106.77 C548.00 106.75 550.50 106.50 553.00 106.37 C555.50 106.24 557.50 105.86 560.00 105.97 C562.50 106.08 565.50 106.63 568.00 107.03 C570.50 107.43 572.92 108.39 575.00 108.36 C577.08 108.33 578.75 107.92 580.50 106.83 C582.25 105.74 584.03 103.00 585.50 101.84 C586.97 100.68 588.13 99.78 589.30 99.84 C590.47 99.90 591.55 101.06 592.50 102.17 C593.45 103.28 594.25 104.94 595.00 106.50 C595.75 108.06 596.17 108.39 597.00 111.50 C597.83 114.61 599.00 120.38 600.00 125.15 C601.00 129.92 602.00 135.13 603.00 140.13 C604.00 145.12 604.88 149.62 606.00 155.12 C607.12 160.62 609.08 170.10 609.70 173.10 M624.20 173.10 C624.50 172.97 625.41 172.53 626.02 172.31 C626.63 172.09 627.24 171.90 627.85 171.75 C628.46 171.60 629.06 171.48 629.67 171.41 C630.28 171.34 630.89 171.30 631.50 171.30 C632.11 171.30 632.72 171.34 633.33 171.41 C633.94 171.48 634.54 171.60 635.15 171.75 C635.76 171.90 636.37 172.09 636.98 172.31 C637.59 172.53 638.50 172.97 638.80 173.10 M653.40 172.83 C658.35 172.83 678.15 172.83 683.10 172.83 M697.60 173.10 C697.90 172.97 698.81 172.53 699.42 172.31 C700.03 172.09 700.64 171.90 701.25 171.75 C701.86 171.60 702.47 171.48 703.08 171.41 C703.69 171.34 704.29 171.30 704.90 171.30 C705.51 171.30 706.12 171.34 706.73 171.41 C707.34 171.48 707.94 171.60 708.55 171.75 C709.16 171.90 709.77 172.09 710.38 172.31 C710.99 172.53 711.90 172.97 712.20 173.10 M726.80 173.10 C727.33 170.55 728.88 163.11 730.00 157.78 C731.12 152.45 732.33 146.68 733.50 141.13 C734.67 135.58 735.92 129.14 737.00 124.48 C738.08 119.82 739.00 116.27 740.00 113.16 C741.00 110.05 742.17 107.72 743.00 105.83 C743.83 103.94 744.27 102.89 745.00 101.84 C745.73 100.79 746.57 99.51 747.40 99.51 C748.23 99.51 748.93 100.68 750.00 101.84 C751.07 103.00 752.58 105.44 753.80 106.50 C755.02 107.56 756.07 107.84 757.30 108.17 C758.53 108.50 759.62 108.61 761.20 108.50 C762.78 108.39 764.87 107.89 766.80 107.50 C768.73 107.11 770.88 106.47 772.80 106.17 C774.72 105.87 776.47 105.68 778.30 105.70 C780.13 105.72 781.88 105.97 783.80 106.30 C785.72 106.63 787.97 107.33 789.80 107.70 C791.63 108.07 793.23 108.53 794.80 108.50 C796.37 108.47 797.80 108.28 799.20 107.50 C800.60 106.72 801.98 104.95 803.20 103.84 C804.42 102.73 805.48 101.51 806.50 100.84 C807.52 100.17 808.38 99.78 809.30 99.84 C810.22 99.90 811.02 100.06 812.00 101.17 C812.98 102.28 814.33 104.78 815.20 106.50 C816.07 108.22 816.37 108.39 817.20 111.50 C818.03 114.61 819.20 120.38 820.20 125.15 C821.20 129.92 822.20 135.13 823.20 140.13 C824.20 145.12 825.08 149.62 826.20 155.12 C827.32 160.62 829.28 170.10 829.90 173.10 M844.40 173.10 C844.70 172.97 845.61 172.53 846.22 172.31 C846.83 172.09 847.44 171.90 848.05 171.75 C848.66 171.60 849.27 171.48 849.88 171.41 C850.49 171.34 851.09 171.30 851.70 171.30 C852.31 171.30 852.92 171.34 853.53 171.41 C854.14 171.48 854.74 171.60 855.35 171.75 C855.96 171.90 856.57 172.09 857.18 172.31 C857.79 172.53 858.70 172.97 859.00 173.10 M873.60 172.83 C878.55 172.83 898.35 172.83 903.30 172.83 M917.80 173.10 C918.10 172.97 919.01 172.53 919.62 172.31 C920.23 172.09 920.84 171.90 921.45 171.75 C922.06 171.60 922.67 171.48 923.28 171.41 C923.89 171.34 924.49 171.30 925.10 171.30 C925.71 171.30 926.31 171.34 926.92 171.41 C927.53 171.48 928.14 171.60 928.75 171.75 C929.36 171.90 929.97 172.09 930.58 172.31 C931.19 172.53 932.10 172.97 932.40 173.10 M947.00 173.10 C947.67 170.10 949.67 161.22 951.00 155.12 C952.33 149.02 953.67 142.35 955.00 136.47 C956.33 130.59 957.67 124.81 959.00 119.82 C960.33 114.82 962.33 108.72 963.00 106.50 " stroke="#0000ff" stroke-width="2.1"/>
</g>
<rect x="45" y="38" width="428" height="135.5" fill="none" stroke="#484848" stroke-width="2"/>
<rect x="535" y="38" width="428" height="135.5" fill="none" stroke="#484848" stroke-width="2"/>
<text x="40.8" y="43" text-anchor="end" font-size="11" fill="#444">600</text>
<text x="40.8" y="88" text-anchor="end" font-size="11" fill="#444">400</text>
<text x="40.8" y="132" text-anchor="end" font-size="11" fill="#444">200</text>
<text x="40.8" y="176.7" text-anchor="end" font-size="11" fill="#444">bps</text>
<text x="530" y="43.5" text-anchor="end" font-size="11" fill="#444">2</text>
<text x="530" y="110.3" text-anchor="end" font-size="11" fill="#444">1</text>
<text x="530.5" y="176.7" text-anchor="end" font-size="11" fill="#444">pps</text>
<text x="20" y="24.8" font-size="14" fill="#333">Throughput</text>
<text x="510" y="24.8" font-size="14" fill="#333">Packet Rate</text>
<path d="M592.3 18.5 h8 l-4 4z" fill="#333"/>
<rect x="252.7" y="10.6" width="12.6" height="12.6" fill="#fff" stroke="#ccc" stroke-width="1"/>
<rect x="254" y="12" width="10" height="10" fill="#ff0000"/>
<text x="269" y="21.2" font-size="11" fill="#444">TX: 512 bps</text>
<rect x="366.0" y="10.6" width="12.6" height="12.6" fill="#fff" stroke="#ccc" stroke-width="1"/>
<rect x="367.3" y="12" width="10" height="10" fill="#0000ff"/>
<text x="383" y="21.2" font-size="11" fill="#444">RX: 512 bps</text>
<rect x="622.2" y="10.6" width="12.6" height="12.6" fill="#fff" stroke="#ccc" stroke-width="1"/>
<rect x="623.5" y="12" width="10" height="10" fill="#ff0000"/>
<text x="639.3" y="21.2" font-size="11" fill="#444">TX: 1.00 pps</text>
<rect x="736.2" y="10.6" width="12.6" height="12.6" fill="#fff" stroke="#ccc" stroke-width="1"/>
<rect x="737.5" y="12" width="10" height="10" fill="#0000ff"/>
<text x="753.3" y="21.2" font-size="11" fill="#444">RX: 1.00 pps</text>
<rect x="845.5" y="5.9" width="119" height="21" rx="3" fill="#fff" stroke="#bdbdbd"/>
<path d="M892.5 26.9 h-44 a3 3 0 0 1 -3 -3 v-15 a3 3 0 0 1 3 -3 h44z" fill="#e4e4e4" stroke="#adadad"/>
<rect x="932.5" y="5.9" width="1" height="21" fill="#c8c8c8"/>
<text x="869" y="20.1" text-anchor="middle" font-size="12" fill="#333">30 sec</text>
<text x="912.5" y="20.1" text-anchor="middle" font-size="12" fill="#333">5 min</text>
<text x="948.8" y="20.1" text-anchor="middle" font-size="12" fill="#333">1 hr</text>
<path d="M971.1 9.3 l9.4 9.4 M980.5 9.3 l-9.4 9.4" stroke="#222" stroke-width="3" fill="none"/>
</svg>
</div>
<div class="abs" style="left:145px;top:634.5px;font-size:12px;color:#222;line-height:14px;white-space:nowrap">Copyright 2014-2016 Netonix</div>
</div></div>
</body></html>
